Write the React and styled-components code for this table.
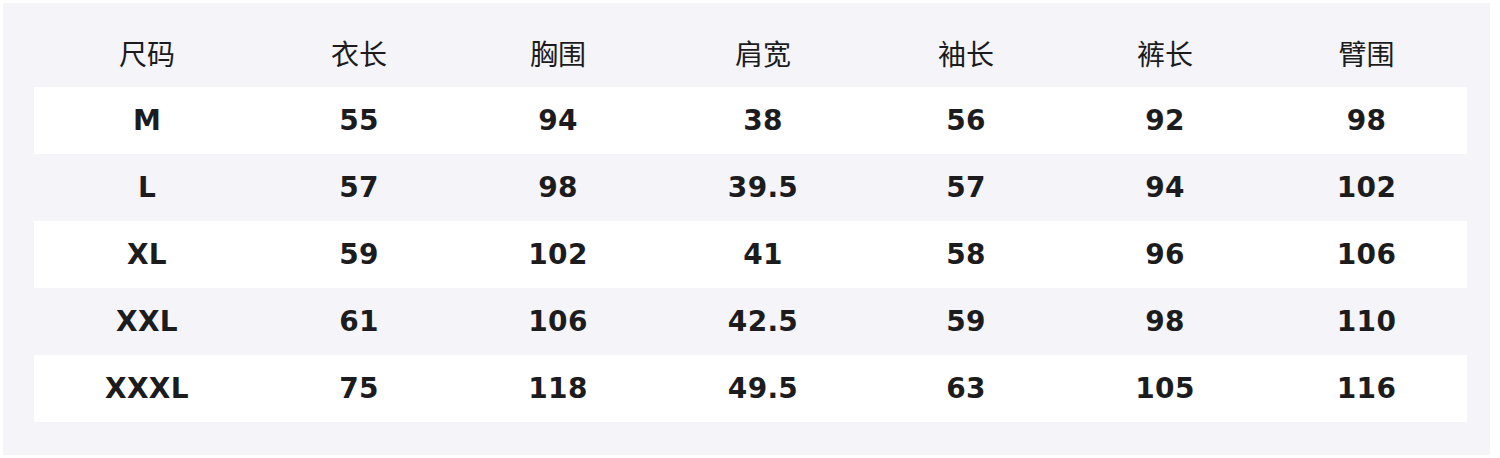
import styled, { createGlobalStyle } from 'styled-components';

const GlobalStyle = createGlobalStyle`
  body {
    margin: 0;
    background: #ffffff;
  }
`;

const Panel = styled.div`
  margin: 3px 0 0 3px;
  width: 1487px;
  height: 452px;
  box-sizing: border-box;
  padding: 15px 23px 0 31px;
  background: #f4f4f9;
`;

const Row = styled.div`
  display: grid;
  grid-template-columns: 226px 198px 200px 210px 196px 202px 1fr;
  height: ${(p) => (p.$head ? '69px' : '67px')};
  align-items: center;
  background: ${(p) => (p.$striped ? '#ffffff' : 'transparent')};
`;

const HeadCell = styled.div`
  text-align: center;
  font-family: "Noto Sans CJK SC", "Noto Sans", sans-serif;
  font-size: 28px;
  font-weight: 400;
  color: #1c1c1e;
`;

const Cell = styled.div`
  text-align: center;
  font-family: "DejaVu Sans", sans-serif;
  font-size: 28px;
  font-weight: 700;
  color: #1c1c1e;
  letter-spacing: 0.3px;
`;

const headers = ['尺码', '衣长', '胸围', '肩宽', '袖长', '裤长', '臂围'];

const rows = [
  ['M', '55', '94', '38', '56', '92', '98'],
  ['L', '57', '98', '39.5', '57', '94', '102'],
  ['XL', '59', '102', '41', '58', '96', '106'],
  ['XXL', '61', '106', '42.5', '59', '98', '110'],
  ['XXXL', '75', '118', '49.5', '63', '105', '116'],
];

export default function App() {
  return (
    <>
      <GlobalStyle />
      <Panel>
        <Row $head>
          {headers.map((h) => (
            <HeadCell key={h}>{h}</HeadCell>
          ))}
        </Row>
        {rows.map((r, i) => (
          <Row key={r[0]} $striped={i % 2 === 0}>
            {r.map((v, j) => (
              <Cell key={j}>{v}</Cell>
            ))}
          </Row>
        ))}
      </Panel>
    </>
  );
}
